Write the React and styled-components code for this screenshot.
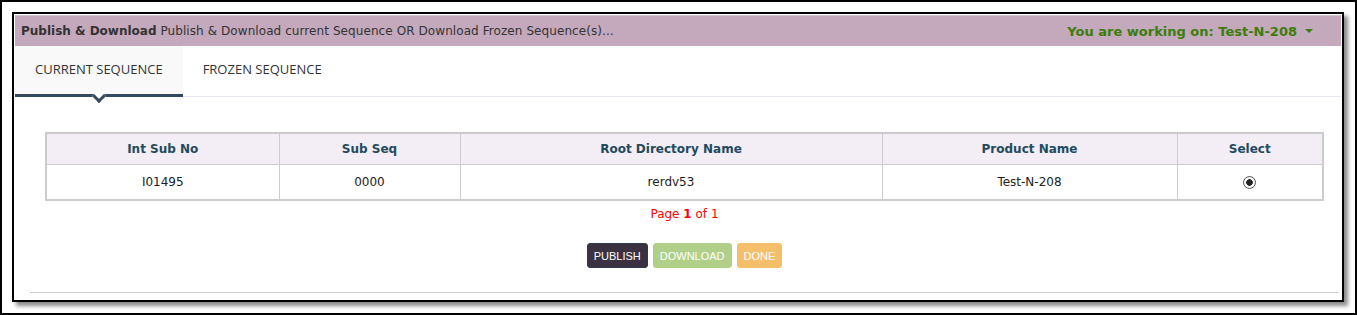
import React from 'react';
import styled, { createGlobalStyle } from 'styled-components';

const GlobalStyle = createGlobalStyle`
  html, body {
    margin: 0;
    padding: 0;
  }
  body {
    box-sizing: border-box;
    width: 1357px;
    height: 315px;
    border: 2px solid #000;
    background: #fff;
    padding: 10px 11px 0 10px;
    font-family: "DejaVu Sans", Verdana, sans-serif;
    color: #333;
  }
  *, *::before, *::after {
    box-sizing: border-box;
  }
`;

const Panel = styled.div`
  height: 290px;
  border: 2px solid #000;
  box-shadow: 4px 4px 4px rgba(0, 0, 0, 0.45);
  padding: 1px 1px 0 1px;
  display: flex;
  flex-direction: column;
`;

const Header = styled.div`
  height: 31px;
  background: #c4a8bc;
  border-top: 1px solid #d2c2ce;
  display: flex;
  align-items: center;
  justify-content: space-between;
  padding: 0 28px 0 6px;
  font-size: 12px;
`;

const Title = styled.div`
  color: #333;
  white-space: nowrap;
  letter-spacing: 0.08px;
  b {
    font-weight: 700;
    letter-spacing: 0;
  }
`;

const Working = styled.div`
  color: #3a7d0a;
  font-weight: 700;
  font-size: 13px;
  display: flex;
  align-items: center;
  gap: 8px;
`;

const Caret = styled.span`
  width: 0;
  height: 0;
  border-left: 4px solid transparent;
  border-right: 4px solid transparent;
  border-top: 4px solid #3a7d0a;
`;

const Tabs = styled.div`
  display: flex;
  height: 51px;
  border-bottom: 1px solid #e5e8f0;
`;

const Tab = styled.div`
  position: relative;
  display: flex;
  align-items: center;
  padding: 0 20px 2px;
  font-family: "Open Sans", sans-serif;
  font-size: 13px;
  color: #333;
  background: ${p => (p.$active ? '#f9f9f9' : 'transparent')};
  border-bottom: 3px solid ${p => (p.$active ? '#34495e' : 'transparent')};
  margin-bottom: -1px;
`;

const Pointer = styled.span`
  position: absolute;
  left: 50%;
  bottom: -7px;
  width: 10px;
  height: 10px;
  margin-left: -5px;
  background: #fff;
  border-right: 3px solid #34495e;
  border-bottom: 3px solid #34495e;
  transform: rotate(45deg);
`;

const Content = styled.div`
  flex: 1;
  display: flex;
  flex-direction: column;
  padding: 35px 17px 0 30px;
`;

const Table = styled.table`
  width: 100%;
  border-collapse: collapse;
  border: 2px solid #ccc;
  font-size: 12px;
`;

const Th = styled.th`
  height: 31px;
  background: #f3edf5;
  color: #224a5e;
  font-weight: 700;
  border: 1px solid #ccc;
  text-align: center;
  width: ${p => p.$w}px;
`;

const Td = styled.td`
  height: 36px;
  border: 1px solid #ccc;
  text-align: center;
  color: #222;
`;

const Radio = styled.span`
  display: inline-block;
  width: 13px;
  height: 13px;
  border: 1px solid #555;
  border-radius: 50%;
  background: radial-gradient(circle, #222 0 3px, #f4f4f4 3.5px);
  vertical-align: middle;
`;

const Pager = styled.div`
  margin-top: 6px;
  text-align: center;
  color: #f00;
  font-size: 12px;
  line-height: 14px;
  b {
    font-weight: 700;
  }
`;

const Buttons = styled.div`
  margin-top: 22px;
  display: flex;
  justify-content: center;
  gap: 5px;
`;

const Button = styled.button`
  height: 25px;
  padding: 0 6px;
  border: 1px solid ${p => p.$border};
  border-radius: 3px;
  background: ${p => p.$bg};
  color: #fff;
  font-family: "Liberation Sans", Arial, sans-serif;
  font-size: 11px;
  text-transform: uppercase;
  cursor: pointer;
`;

const Rule = styled.div`
  margin: 0 3px 7px 15px;
  border-top: 1px solid #ccc;
`;

const columns = [
  { label: 'Int Sub No', w: 233 },
  { label: 'Sub Seq', w: 181 },
  { label: 'Root Directory Name', w: 422 },
  { label: 'Product Name', w: 295 },
  { label: 'Select', w: 146 },
];

const rows = [
  { sub: 'I01495', seq: '0000', root: 'rerdv53', product: 'Test-N-208' },
];

export default function App() {
  return (
    <>
      <GlobalStyle />
      <Panel>
        <Header>
          <Title>
            <b>Publish &amp; Download</b> Publish &amp; Download current Sequence OR Download Frozen Sequence(s)...
          </Title>
          <Working>
            You are working on: Test-N-208
            <Caret />
          </Working>
        </Header>
        <Tabs>
          <Tab $active>
            CURRENT SEQUENCE
            <Pointer />
          </Tab>
          <Tab>FROZEN SEQUENCE</Tab>
        </Tabs>
        <Content>
          <Table>
            <thead>
              <tr>
                {columns.map(c => (
                  <Th key={c.label} $w={c.w}>{c.label}</Th>
                ))}
              </tr>
            </thead>
            <tbody>
              {rows.map(r => (
                <tr key={r.sub}>
                  <Td>{r.sub}</Td>
                  <Td>{r.seq}</Td>
                  <Td>{r.root}</Td>
                  <Td>{r.product}</Td>
                  <Td><Radio /></Td>
                </tr>
              ))}
            </tbody>
          </Table>
          <Pager>Page <b>1</b> of 1</Pager>
          <Buttons>
            <Button $bg="#3b3140" $border="#2e3a4a">Publish</Button>
            <Button $bg="#b0d08a" $border="#b0d08a">Download</Button>
            <Button $bg="#f4be6a" $border="#f4be6a">Done</Button>
          </Buttons>
        </Content>
        <Rule />
      </Panel>
    </>
  );
}
